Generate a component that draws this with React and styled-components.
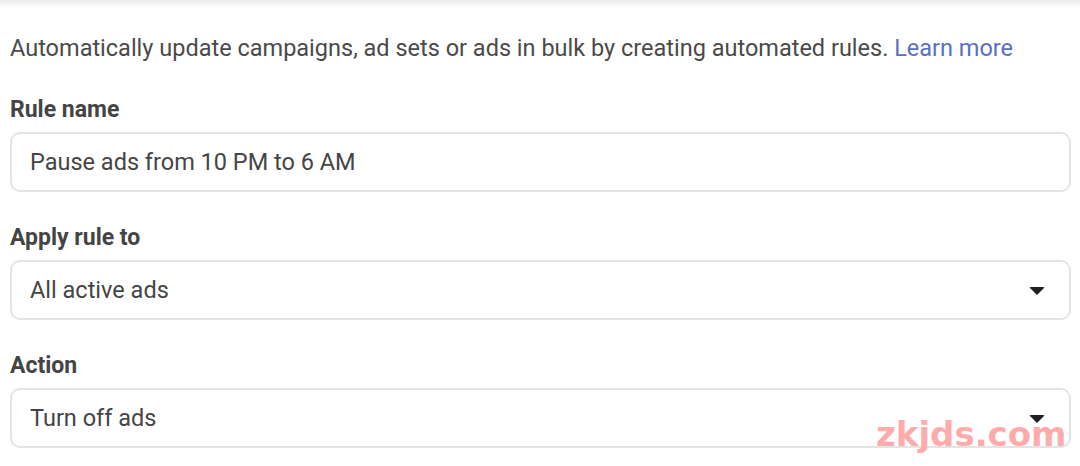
import React from "react";
import styled, { createGlobalStyle } from "styled-components";

const GlobalStyle = createGlobalStyle`
  html, body {
    margin: 0;
    padding: 0;
    background: #ffffff;
  }
  body {
    font-family: Roboto, "Liberation Sans", Arial, sans-serif;
  }
`;

const Page = styled.div`
  position: relative;
  width: 1080px;
  height: 466px;
  overflow: hidden;
  background: #ffffff;
`;

const TopShade = styled.div`
  height: 8px;
  background: linear-gradient(#ececec, #ffffff);
`;

const Content = styled.div`
  padding: 24px 10px 0 10px;
  display: flex;
  flex-direction: column;
`;

const Intro = styled.p`
  margin: 0 0 32px 0;
  font-size: 23.5px;
  line-height: 32px;
  color: #4a4a4a;
  white-space: nowrap;
`;

const Link = styled.a`
  color: #5a6fc4;
  text-decoration: none;
`;

const Field = styled.div`
  display: flex;
  flex-direction: column;
  margin-bottom: 32px;
`;

const Label = styled.label`
  font-size: 23px;
  font-weight: 700;
  line-height: 24px;
  color: #444444;
  padding-top: 2px;
  margin-bottom: 10px;
`;

const Box = styled.div`
  box-sizing: border-box;
  height: 60px;
  width: 1061px;
  border: 2px solid #e4e4e4;
  border-radius: 10px;
  display: flex;
  align-items: center;
  justify-content: space-between;
  padding: 0 24px 0 18px;
  font-size: 23.5px;
  color: #454545;
`;

const Caret = styled.span`
  width: 0;
  height: 0;
  border-left: 8px solid transparent;
  border-right: 8px solid transparent;
  border-top: 8px solid #1f1f1f;
  border-radius: 2px;
  margin-top: 2px;
`;

const Watermark = styled.div`
  position: absolute;
  left: 876px;
  top: 414px;
  font-family: "DejaVu Sans", "Liberation Sans", sans-serif;
  font-weight: 700;
  font-size: 34px;
  color: #ffabab;
  pointer-events: none;
`;

export default function App() {
  return (
    <Page>
      <GlobalStyle />
      <TopShade />
      <Content>
        <Intro>
          Automatically update campaigns, ad sets or ads in bulk by creating
          automated rules. <Link href="#">Learn more</Link>
        </Intro>
        <Field>
          <Label>Rule name</Label>
          <Box>Pause ads from 10 PM to 6 AM</Box>
        </Field>
        <Field>
          <Label>Apply rule to</Label>
          <Box>
            All active ads
            <Caret />
          </Box>
        </Field>
        <Field>
          <Label>Action</Label>
          <Box>
            Turn off ads
            <Caret />
          </Box>
        </Field>
      </Content>
      <Watermark>zkjds.com</Watermark>
    </Page>
  );
}
